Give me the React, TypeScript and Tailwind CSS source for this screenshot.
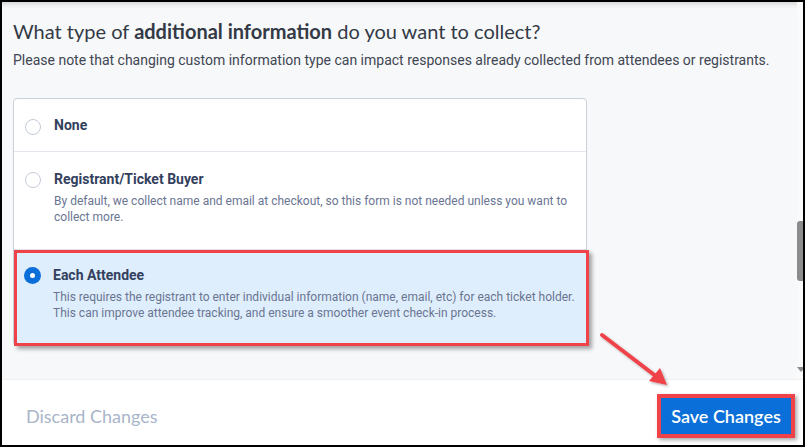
import React from 'react';

const options = [
  { id: 'none', label: 'None', desc: '' },
  {
    id: 'buyer',
    label: 'Registrant/Ticket Buyer',
    desc: 'By default, we collect name and email at checkout, so this form is not needed unless you want to collect more.',
  },
  {
    id: 'attendee',
    label: 'Each Attendee',
    desc: 'This requires the registrant to enter individual information (name, email, etc) for each ticket holder. This can improve attendee tracking, and ensure a smoother event check-in process.',
  },
];

function Radio({ checked }: { checked: boolean }) {
  if (checked) {
    return (
      <span className="mt-[2px] flex h-[17px] w-[17px] shrink-0 items-center justify-center rounded-full bg-[#0a6fd8]">
        <span className="h-[5px] w-[5px] rounded-full bg-white" />
      </span>
    );
  }
  return <span className="mt-[3px] h-[16px] w-[16px] shrink-0 rounded-full border border-[#c5cbd8] bg-white" />;
}

export default function App() {
  const selected = 'attendee';
  return (
    <div className="relative flex h-[447px] w-[805px] flex-col overflow-hidden border-2 border-black bg-white font-['Roboto',sans-serif]">
      <div className="flex flex-1 bg-[#f7f8fa] shadow-[inset_0_6px_6px_-5px_rgba(0,0,0,0.2)]">
        <div className="flex-1 pl-[11px] pt-[15px]">
          <h2 className="font-['Lato',sans-serif] text-[20px] leading-[28px] text-[#333a45]">
            What type of <span className="font-bold">additional information</span> do you want to collect?
          </h2>
          <p className="mt-[6px] text-[14px] leading-[18px] text-[#404653]">
            Please note that changing custom information type can impact responses already collected from attendees or registrants.
          </p>
          <div className="mt-[29px] w-[574px] rounded-[4px] border border-[#c9cfdb] bg-white">
            {options.map((o, i) => {
              const isSel = o.id === selected;
              return (
                <div
                  key={o.id}
                  className={
                    isSel
                      ? '-mb-[1px] mr-[-3px] flex gap-[12px] border-[3px] border-[#ef4349] bg-[#dfeefc] pb-[22px] pl-[7px] pt-[12px] shadow-[3px_3px_4px_rgba(0,0,0,0.35)]'
                      : 'flex gap-[13px] border-b border-[#e3e6ec] pl-[11px] ' + (i === 0 ? 'h-[53px] items-center' : 'pb-[24px] pt-[17px]')
                  }
                >
                  <Radio checked={isSel} />
                  <div className={i === 0 ? '' : 'pr-[2px]'}>
                    <div className="text-[14px] font-bold leading-[20px] text-[#33415e]">{o.label}</div>
                    {o.desc && <div className="mt-[4px] text-[12px] leading-[16px] text-[#6a7592]">{o.desc}</div>}
                  </div>
                </div>
              );
            })}
          </div>
        </div>
        <div className="relative w-[6px] bg-[#fafafa]">
          <div className="absolute left-0 top-[219px] h-[60px] w-[6px] rounded-l-[3px] bg-[#8c8c8c]" />
          <div className="absolute left-0 top-[365px] h-0 w-0 border-x-[4px] border-t-[5px] border-x-transparent border-t-[#8c8c8c]" />
        </div>
      </div>
      <div className="flex h-[66px] items-end justify-between border-t border-[#eef0f3] pb-[7px] pl-[24px] pr-[8px] font-['Lato',sans-serif]">
        <span className="mb-[10px] text-[18px] leading-[24px] text-[#a9b5c9]">Discard Changes</span>
        <div className="border-[4px] border-[#ef4349] shadow-[2px_2px_4px_rgba(0,0,0,0.35)]">
          <button className="h-[36px] w-[130px] bg-[#0a6fd8] text-[18px] font-semibold text-white">Save Changes</button>
        </div>
      </div>
      <svg className="pointer-events-none absolute left-0 top-0" width="805" height="447">
        <defs>
          <filter id="sh" x="-20%" y="-20%" width="140%" height="140%">
            <feDropShadow dx="1.5" dy="1.5" stdDeviation="1.2" floodColor="#000" floodOpacity="0.3" />
          </filter>
        </defs>
        <g filter="url(#sh)">
          <line x1="600" y1="333" x2="655" y2="375" stroke="#ef4349" strokeWidth="4" strokeLinecap="round" />
          <polygon points="665,383 647,379 658,366" fill="#ef4349" />
        </g>
      </svg>
    </div>
  );
}
